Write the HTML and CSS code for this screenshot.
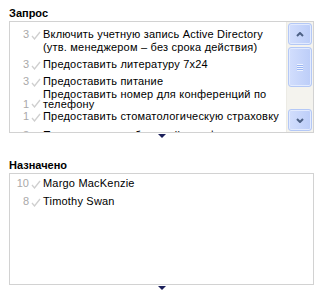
FILE: index.html
```html
<!DOCTYPE html>
<html lang="ru">

<head>
    <meta charset="UTF-8" />
    <title>Запрос</title>
    <link rel="stylesheet" href="styles.css">
</head>

<body>
    <!-- Requested items -->
    <div class="panel panel-request">
        <div class="panel-title">Запрос</div>
        <div class="list-box">
            <ul class="items">
                <li class="item">
                    <span class="count">3</span>
                    <svg class="check" width="10" height="9" viewBox="0 0 10 9"><polyline points="1,5 3.5,8 9,1" /></svg>
                    <span class="label">Включить учетную запись Active Directory<br>(утв. менеджером – без срока действия)</span>
                </li>
                <li class="item">
                    <span class="count">3</span>
                    <svg class="check" width="10" height="9" viewBox="0 0 10 9"><polyline points="1,5 3.5,8 9,1" /></svg>
                    <span class="label">Предоставить литературу 7x24</span>
                </li>
                <li class="item">
                    <span class="count">3</span>
                    <svg class="check" width="10" height="9" viewBox="0 0 10 9"><polyline points="1,5 3.5,8 9,1" /></svg>
                    <span class="label">Предоставить питание</span>
                </li>
                <li class="item item-tight">
                    <span class="count">1</span>
                    <svg class="check" width="10" height="9" viewBox="0 0 10 9"><polyline points="1,5 3.5,8 9,1" /></svg>
                    <span class="label">Предоставить номер для конференций по<br>телефону</span>
                </li>
                <li class="item">
                    <span class="count">1</span>
                    <svg class="check" width="10" height="9" viewBox="0 0 10 9"><polyline points="1,5 3.5,8 9,1" /></svg>
                    <span class="label">Предоставить стоматологическую страховку</span>
                </li>
                <li class="item item-last">
                    <span class="count">3</span>
                    <svg class="check" width="10" height="9" viewBox="0 0 10 9"><polyline points="1,5 3.5,8 9,1" /></svg>
                    <span class="label">Предоставить мобильный телефон</span>
                </li>
            </ul>

            <!-- Scroll bar -->
            <div class="scrollbar">
                <div class="sb-btn">
                    <svg width="8" height="5" viewBox="0 0 8 5"><polyline points="1,4 4,1 7,4" /></svg>
                </div>
                <div class="sb-thumb">
                    <span class="grip"></span>
                </div>
                <div class="sb-track"></div>
                <div class="sb-btn">
                    <svg width="8" height="5" viewBox="0 0 8 5"><polyline points="1,1 4,4 7,1" /></svg>
                </div>
            </div>
        </div>
        <div class="splitter"><span class="splitter-arrow"></span></div>
    </div>

    <!-- Assigned people -->
    <div class="panel panel-assigned">
        <div class="panel-title">Назначено</div>
        <div class="list-box">
            <ul class="items items-assigned">
                <li class="item">
                    <span class="count">10</span>
                    <svg class="check" width="10" height="9" viewBox="0 0 10 9"><polyline points="1,5 3.5,8 9,1" /></svg>
                    <span class="label">Margo MacKenzie</span>
                </li>
                <li class="item">
                    <span class="count">8</span>
                    <svg class="check" width="10" height="9" viewBox="0 0 10 9"><polyline points="1,5 3.5,8 9,1" /></svg>
                    <span class="label">Timothy Swan</span>
                </li>
            </ul>
        </div>
        <div class="splitter"><span class="splitter-arrow"></span></div>
    </div>
</body>

</html>
```

FILE: styles.css
```css
body {
    font-family: "Liberation Sans", Arial, sans-serif;
    font-size: 11px;
    line-height: 13px;
    color: #000;
    background: #fff;
    margin: 0;
    padding: 0;
}

.panel {
    padding: 0 6px 0 9px;
}

.panel-request {
    padding-top: 7px;
}

.panel-assigned {
    padding-top: 20px;
}

.panel-title {
    font-weight: bold;
    margin-bottom: 1px;
}

.list-box {
    display: flex;
    height: 112px;
    box-sizing: border-box;
    border: 1px solid #d2d2d2;
    overflow: hidden;
}

.items {
    flex: 1;
    list-style-type: none;
    margin: 0;
    padding: 4px 0 0 0;
    overflow: hidden;
}

.items-assigned {
    padding-top: 1px;
}

.item {
    display: flex;
    align-items: flex-start;
    padding: 2px 0;
}

.items-assigned .item {
    padding: 2px 0 3px;
}

/* wrapped entry sits tighter than the others */
.item-tight {
    align-items: flex-end;
    line-height: 10px;
    padding: 0;
    margin: -1px 0 -1px;
}

.item-last {
    margin-top: 2px;
}

.count {
    width: 19px;
    text-align: right;
    color: #a9a9a9;
    flex: none;
}

.check {
    flex: none;
    margin: 3px 0 0 2px;
    fill: none;
    stroke: #cfcfcf;
    stroke-width: 1.3;
}

.item-tight .check {
    margin-bottom: 1px;
}

.label {
    margin-left: 2px;
    white-space: nowrap;
    letter-spacing: 0.2px;
}

/* XP style scroll bar */
.scrollbar {
    flex: none;
    width: 27px;
    display: flex;
    flex-direction: column;
    padding: 1px;
    box-sizing: border-box;
    background: #f4f3ee;
    border-left: 1px solid #ecebe5;
}

.sb-btn,
.sb-thumb {
    border: 1px solid #b4c8f6;
    border-radius: 3px;
    background: linear-gradient(to right, #d2defd, #bccdf8);
    box-shadow: inset 0 0 0 1px #e3ebfe;
    display: flex;
    align-items: center;
    justify-content: center;
}

.sb-btn {
    height: 22px;
    box-sizing: border-box;
}

.sb-btn svg {
    fill: none;
    stroke: #4d6185;
    stroke-width: 2;
}

.sb-thumb {
    height: 40px;
    margin-top: 2px;
    box-sizing: border-box;
}

.sb-track {
    flex: 1;
}

.grip {
    width: 6px;
    height: 7px;
    background: repeating-linear-gradient(to bottom, #eef3fe 0, #eef3fe 1px, #9bb6f3 1px, #9bb6f3 2px);
}

.splitter {
    display: flex;
    justify-content: center;
    height: 6px;
}

.splitter-arrow {
    width: 0;
    height: 0;
    margin-top: 1px;
    border-top: 4px solid #1b1f5a;
    border-left: 4px solid transparent;
    border-right: 4px solid transparent;
}
```
